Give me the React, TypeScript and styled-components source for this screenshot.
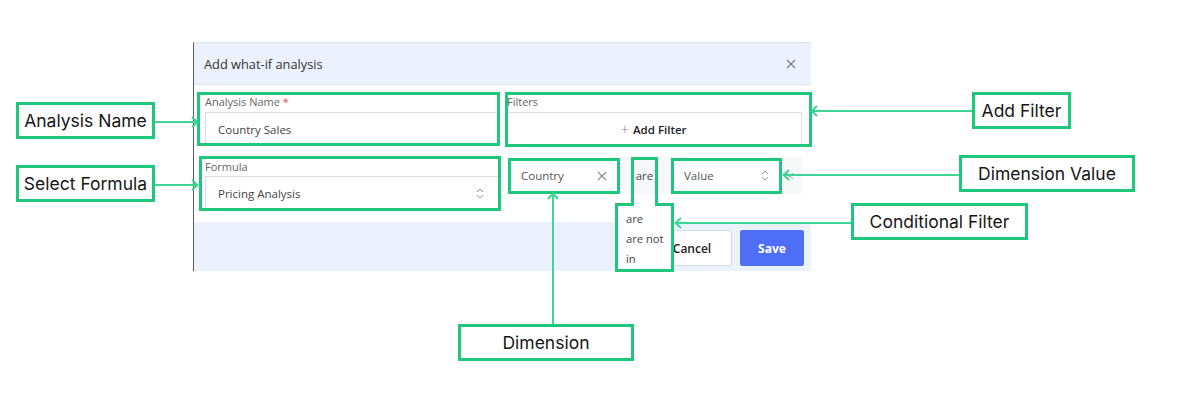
import styled, { createGlobalStyle, css } from 'styled-components'

const GREEN = '#1fc77d'
const LINE = '#3fd597'
const UI_FONT = `"Open Sans", "Noto Sans", sans-serif`

const GlobalStyle = createGlobalStyle`
  html, body {
    margin: 0;
    padding: 0;
    background: #ffffff;
  }
  * {
    box-sizing: border-box;
  }
`

const Canvas = styled.div`
  position: relative;
  width: 1188px;
  height: 404px;
  padding: 42px 0 0 193px;
  background: #ffffff;
  overflow: hidden;
`

const Dialog = styled.div`
  width: 618px;
  border-left: 1px solid #5c5c5c;
  border-top: 1px solid #dde3ec;
  background: #ffffff;
  font-family: ${UI_FONT};
  color: #333;
`

const Header = styled.div`
  height: 42px;
  display: flex;
  align-items: center;
  justify-content: space-between;
  padding: 0 15px 0 10px;
  background: #ecf2fd;
  border-bottom: 1px solid #dfe5ef;
`

const Title = styled.div`
  font-size: 12.8px;
  color: #333;
`

const Body = styled.div`
  display: grid;
  grid-template-columns: 294px 295px;
  column-gap: 8px;
  row-gap: 11px;
  align-items: start;
  padding: 11px 9px 12px 11px;
`

const marked = (inset?: string) =>
  inset &&
  css`
    &::after {
      content: '';
      position: absolute;
      inset: ${inset};
      border: 3px solid ${GREEN};
      pointer-events: none;
    }
  `

const Field = styled.div<{ $mark?: string; $pt?: number }>`
  position: relative;
  display: flex;
  flex-direction: column;
  gap: ${(p) => (p.$pt ? 3 : 4)}px;
  padding-top: ${(p) => p.$pt ?? 0}px;
  ${(p) => marked(p.$mark)}
`

const Label = styled.div`
  font-size: 11px;
  line-height: 12px;
  color: #666;
`

const Required = styled.span`
  color: #e0544f;
`

const Input = styled.div<{ $center?: boolean }>`
  height: 34px;
  display: flex;
  align-items: center;
  justify-content: ${(p) => (p.$center ? 'center' : 'space-between')};
  gap: 4px;
  padding: 0 14px 0 12px;
  border: 1px solid #d9dde4;
  background: #fff;
  font-size: 11.5px;
  color: #444;
`

const Plus = styled.span`
  font-size: 15px;
  font-weight: 300;
  color: #8a8a8a;
  line-height: 1;
`

const AddText = styled.span`
  font-weight: 600;
  color: #222;
`

const FilterRow = styled.div`
  height: 37px;
  display: flex;
  align-items: center;
  padding: 0 4px;
  background: #f7f8fa;
`

const Chip = styled.div<{ $w: number; $mark?: string }>`
  position: relative;
  width: ${(p) => p.$w}px;
  height: 30px;
  display: flex;
  align-items: center;
  justify-content: space-between;
  padding: 0 10px;
  background: #fff;
  font-size: 11.5px;
  color: #555;
  ${(p) => marked(p.$mark)}
`

const Operator = styled.div`
  position: relative;
  width: 27px;
  height: 30px;
  margin: 0 16px 0 14px;
  display: flex;
  align-items: center;
  justify-content: center;
  font-size: 11.5px;
  color: #444;
`

const Menu = styled.div`
  position: absolute;
  left: -13px;
  top: 46px;
  width: 53px;
  padding-top: 2px;
  background: #fff;
  z-index: 2;
`

const MenuItem = styled.div`
  height: 20px;
  line-height: 20px;
  padding-left: 8px;
  font-size: 11.2px;
  color: #444;
  white-space: nowrap;
`

const Remove = styled.div`
  margin-left: 7px;
  display: flex;
  align-items: center;
`

const Footer = styled.div`
  height: 49px;
  display: flex;
  justify-content: flex-end;
  align-items: flex-start;
  gap: 8px;
  padding: 8px 7px 0 0;
  background: #ecf2fd;
`

const Button = styled.button<{ $primary?: boolean }>`
  height: 36px;
  width: ${(p) => (p.$primary ? 64 : 80)}px;
  border: 1px solid ${(p) => (p.$primary ? '#4f6ef7' : '#d6dbe3')};
  border-radius: 2px;
  background: ${(p) => (p.$primary ? '#4f6ef7' : '#fff')};
  color: ${(p) => (p.$primary ? '#fff' : '#222')};
  font-family: ${UI_FONT};
  font-size: 12px;
  font-weight: ${(p) => (p.$primary ? 700 : 600)};
  padding: 0;
`

const Overlay = styled.svg`
  position: absolute;
  left: 0;
  top: 0;
  pointer-events: none;
  z-index: 3;
`

const Callout = styled.div<{ $x: number; $y: number; $w: number }>`
  position: absolute;
  left: ${(p) => p.$x}px;
  top: ${(p) => p.$y}px;
  width: ${(p) => p.$w}px;
  height: 37px;
  display: flex;
  align-items: center;
  justify-content: center;
  border: 3px solid ${GREEN};
  background: #fff;
  font-family: Inter, "Liberation Sans", sans-serif;
  font-size: 17.5px;
  font-weight: 400;
  color: #161616;
  z-index: 4;
`

function CloseIcon({ size = 10, color = '#7a7a7a' }: { size?: number; color?: string }) {
  return (
    <svg width={size} height={size} viewBox="0 0 10 10">
      <path d="M1 1 L9 9 M9 1 L1 9" stroke={color} strokeWidth="1.1" fill="none" />
    </svg>
  )
}

function Chevrons() {
  return (
    <svg width="8" height="13" viewBox="0 0 8 13">
      <path d="M1 5 L4 2 L7 5 M1 8 L4 11 L7 8" stroke="#9a9a9a" strokeWidth="1" fill="none" />
    </svg>
  )
}

const callouts = [
  { text: 'Analysis Name', x: 16, y: 102, w: 139 },
  { text: 'Select Formula', x: 16, y: 165, w: 139 },
  { text: 'Add Filter', x: 972, y: 92, w: 99 },
  { text: 'Dimension Value', x: 959, y: 155, w: 176 },
  { text: 'Conditional Filter', x: 851, y: 203, w: 177 },
  { text: 'Dimension', x: 458, y: 324, w: 176 },
]

export default function App() {
  return (
    <>
      <GlobalStyle />
      <Canvas>
        <Dialog>
          <Header>
            <Title>Add what-if analysis</Title>
            <CloseIcon />
          </Header>

          <Body>
            <Field $mark="-4px -1px 0 -8px">
              <Label>
                Analysis Name <Required>*</Required>
              </Label>
              <Input>Country Sales</Input>
            </Field>

            <Field $mark="-4px -10px -1px -2px">
              <Label>Filters</Label>
              <Input $center>
                <Plus>+</Plus>
                <AddText>Add Filter</AddText>
              </Input>
            </Field>

            <Field $pt={4} $mark="-1px -2px -1px -6px">
              <Label>Formula</Label>
              <Input>
                Pricing Analysis
                <Chevrons />
              </Input>
            </Field>

            <FilterRow>
              <Chip $w={106} $mark="-3px">
                Country
                <CloseIcon size={10} color="#8a8a8a" />
              </Chip>
              <Operator>
                are
                <Menu>
                  <MenuItem>are</MenuItem>
                  <MenuItem>are not</MenuItem>
                  <MenuItem>in</MenuItem>
                </Menu>
              </Operator>
              <Chip $w={105} $mark="-3px">
                Value
                <Chevrons />
              </Chip>
              <Remove>
                <CloseIcon size={8} color="#999" />
              </Remove>
            </FilterRow>
          </Body>

          <Footer>
            <Button>Cancel</Button>
            <Button $primary>Save</Button>
          </Footer>
        </Dialog>

        <Overlay width="1188" height="404" viewBox="0 0 1188 404">
          <g fill="none" strokeWidth="2">
            <path
              d="M632.5 204.5 V158.5 H656.5 V204.5 H672.5 V270.5 H616.5 V204.5 Z"
              stroke={GREEN}
              strokeWidth="3"
            />
            <g stroke={LINE}>
              <path d="M155 122 H197 M192 117 L197.5 122 L192 127" />
              <path d="M155 185 H197 M192 180 L197.5 185 L192 190" />
              <path d="M972 111 H812 M817 106 L811.5 111 L817 116" />
              <path d="M960 175 H784 M789 170 L783.5 175 L789 180" />
              <path d="M851 223 H676 M681 218 L675.5 223 L681 228" />
              <path d="M553 324 V194 M548 199 L553 193.5 L558 199" />
            </g>
          </g>
        </Overlay>

        {callouts.map((c) => (
          <Callout key={c.text} $x={c.x} $y={c.y} $w={c.w}>
            {c.text}
          </Callout>
        ))}
      </Canvas>
    </>
  )
}
